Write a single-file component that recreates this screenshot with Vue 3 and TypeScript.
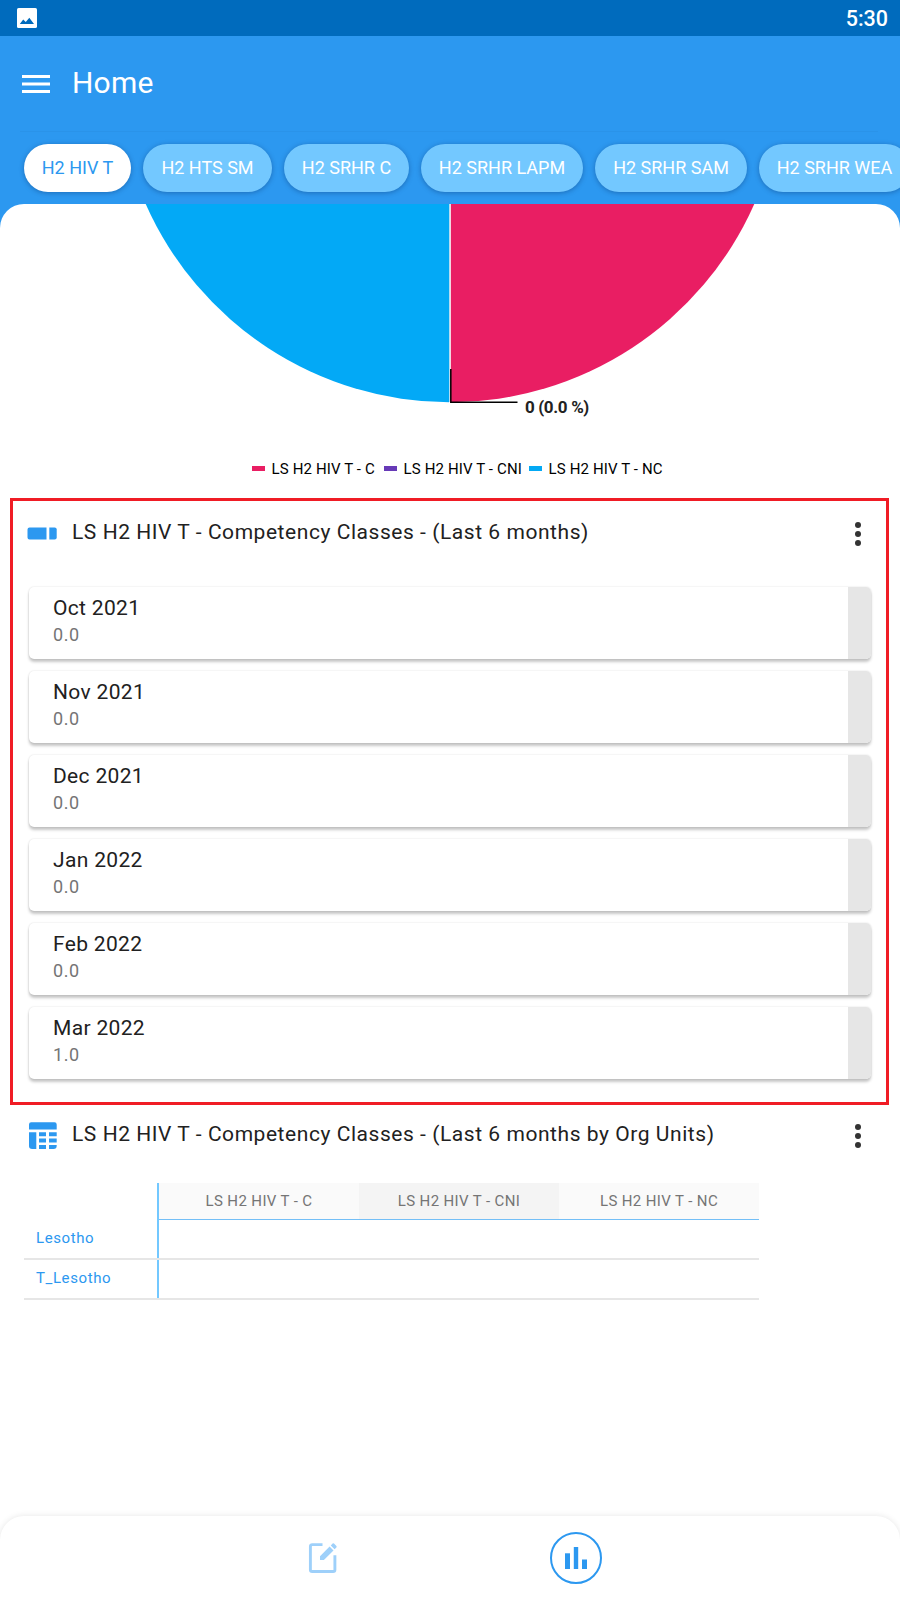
<script setup lang="ts">
interface Tab { label: string; width: number }
interface Period { name: string; value: string }
interface Series { name: string; color: string; width: number }

const tabs: Tab[] = [
  { label: 'H2 HIV T', width: 107 },
  { label: 'H2 HTS SM', width: 129 },
  { label: 'H2 SRHR C', width: 125 },
  { label: 'H2 SRHR LAPM', width: 162 },
  { label: 'H2 SRHR SAM', width: 152 },
  { label: 'H2 SRHR WEA', width: 151 },
]

const series: Series[] = [
  { name: 'LS H2 HIV T - C', color: '#e91e63', width: 132 },
  { name: 'LS H2 HIV T - CNI', color: '#673ab7', width: 145 },
  { name: 'LS H2 HIV T - NC', color: '#03a9f4', width: 140 },
]

const periods: Period[] = [
  { name: 'Oct 2021', value: '0.0' },
  { name: 'Nov 2021', value: '0.0' },
  { name: 'Dec 2021', value: '0.0' },
  { name: 'Jan 2022', value: '0.0' },
  { name: 'Feb 2022', value: '0.0' },
  { name: 'Mar 2022', value: '1.0' },
]

const orgUnits: string[] = ['Lesotho', 'T_Lesotho']
</script>

<template>
  <div class="screen">
    <div class="status">
      <svg class="status-icon" width="20" height="20" viewBox="0 0 20 20">
        <rect width="20" height="20" rx="1.6" fill="#fff" />
        <path d="M2.800 16 6.200 11.600 8.800 14.100 12.300 9.800 17 16Z" fill="#006bbd" />
      </svg>
      <span class="clock">5:30</span>
    </div>

    <header class="header">
      <div class="bar">
        <svg class="menu" width="28" height="18" viewBox="0 0 28 18" fill="#fff">
          <rect width="28" height="3" />
          <rect y="7.5" width="28" height="3" />
          <rect y="15" width="28" height="3" />
        </svg>
        <h1 class="heading">Home</h1>
      </div>
      <nav class="tabs">
        <div
          v-for="(tab, i) in tabs"
          :key="tab.label"
          class="tab"
          :class="{ active: i === 0 }"
          :style="{ width: tab.width + 'px' }"
        >{{ tab.label }}</div>
      </nav>
    </header>

    <main class="panel">
      <section class="pie">
        <svg width="900" height="225" viewBox="0 204 900 225">
          <path d="M449 204H145.700A333 333 0 0 0 449 402.300Z" fill="#03a9f6" />
          <path d="M451 204H754.300A333 333 0 0 1 451 402.300Z" fill="#e91e63" />
          <rect x="449" y="204" width="1" height="198" fill="#b4dcf2" />
          <rect x="450" y="204" width="1" height="198" fill="#f2d7e0" />
          <path d="M450.800 369V402.300H517.500" fill="none" stroke="#000" stroke-width="1.5" />
        </svg>
        <span class="slice-label">0 (0.0 %)</span>
        <div class="legend">
          <div v-for="s in series" :key="s.name" class="legend-item" :style="{ width: s.width + 'px' }">
            <i class="swatch" :style="{ background: s.color }"></i>
            <span>{{ s.name }}</span>
          </div>
        </div>
      </section>

      <section class="boxed">
        <div class="title-row">
          <svg class="title-icon" width="30" height="30" viewBox="0 0 30 30" fill="#2c98f0">
            <path d="M2.500 8.500H19.500V20.500H2.500A2 2 0 0 1 0.500 18.500V10.500A2 2 0 0 1 2.500 8.500Z" />
            <path d="M22.300 8.500H27.700A2 2 0 0 1 29.700 10.500V18.500A2 2 0 0 1 27.700 20.500H22.300Z" />
          </svg>
          <h2 class="title">LS H2 HIV T - Competency Classes - (Last 6 months)</h2>
          <svg class="more" width="6" height="24" viewBox="0 0 6 24" fill="#333">
            <circle cx="3" cy="3" r="3" /><circle cx="3" cy="12" r="3" /><circle cx="3" cy="21" r="3" />
          </svg>
        </div>
        <div class="cards">
          <article v-for="p in periods" :key="p.name" class="card">
            <div class="card-body">
              <div class="card-name">{{ p.name }}</div>
              <div class="card-value">{{ p.value }}</div>
            </div>
            <div class="card-edge"></div>
          </article>
        </div>
      </section>

      <section class="table-section">
        <div class="title-row">
          <svg class="title-icon" width="30" height="30" viewBox="0 1 30 30" fill="#2c98f0">
            <path d="M4.200 2.300H27.500A2.200 2.200 0 0 1 29.700 4.500V9.500H2V4.500A2.200 2.200 0 0 1 4.200 2.300Z" />
            <path d="M2 12.300H9.300V29H5.200A3.200 3.200 0 0 1 2 25.800Z" />
            <path d="M12 12.300H19V16.200H12ZM22 12.300H29.700V16.200H22ZM12 18.600H19V22.500H12ZM22 18.600H29.700V22.500H22ZM12 25H19V29H12ZM22 25H29.700V25.800A3.200 3.200 0 0 1 26.500 29H22Z" />
          </svg>
          <h2 class="title">LS H2 HIV T - Competency Classes - (Last 6 months by Org Units)</h2>
          <svg class="more" width="6" height="24" viewBox="0 0 6 24" fill="#333">
            <circle cx="3" cy="3" r="3" /><circle cx="3" cy="12" r="3" /><circle cx="3" cy="21" r="3" />
          </svg>
        </div>
        <div class="table">
          <div class="row head">
            <div class="corner"></div>
            <div v-for="s in series" :key="s.name" class="col-head">{{ s.name }}</div>
          </div>
          <div v-for="unit in orgUnits" :key="unit" class="row">
            <div class="row-head">{{ unit }}</div>
            <div v-for="s in series" :key="s.name" class="cell"></div>
          </div>
        </div>
      </section>
    </main>

    <footer class="bottom">
      <svg class="edit" width="30" height="32" viewBox="0 0 30 32">
        <path d="M14.500 2.600H4.200A1.800 1.800 0 0 0 2.400 4.400V27.700A1.800 1.800 0 0 0 4.200 29.500H25.100A1.800 1.800 0 0 0 26.900 27.700V13.200" fill="none" stroke="#9ed0fa" stroke-width="2.900" />
        <path d="M12 14.200 21.600 4.600 25.500 8.500 15.900 18.100H12ZM22.800 3.400 24.600 1.600Q25.300 1 26 1.600L28.400 4Q29 4.700 28.400 5.500L26.600 7.200Z" fill="#9ed0fa" />
      </svg>
      <div class="current">
        <svg width="22" height="22" viewBox="0 0 22 22" fill="#2c98f0">
          <rect y="6.300" width="5" height="15.700" /><rect x="8.800" width="4.400" height="22" /><rect x="17" y="12.500" width="5" height="9.500" />
        </svg>
      </div>
    </footer>
  </div>
</template>

<style>
body { margin: 0; }
</style>

<style scoped>
.screen {
  width: 900px;
  height: 1600px;
  display: flex;
  flex-direction: column;
  overflow: hidden;
  background: linear-gradient(#2c98f0 300px, #fff 300px);
  font-family: Roboto, "Liberation Sans", sans-serif;
}
.screen * { box-sizing: border-box; }
.screen svg { display: block; flex: none; }
.status {
  flex: none;
  height: 36px;
  padding: 0 12px 0 17px;
  display: flex;
  align-items: center;
  justify-content: space-between;
  background: #006bbd;
  color: #fff;
}
.clock { font-size: 21.500px; font-weight: 500; line-height: 36px; padding-top: 2px; }
.header { flex: none; height: 168px; }
.bar {
  height: 96px;
  margin: 0 22px 0 20px;
  padding-left: 2px;
  display: flex;
  align-items: center;
  border-bottom: 1px solid #2a93e9;
}
.menu { margin-top: 1px; }
.heading { margin: 0 0 2px 22px; font-size: 30px; font-weight: 400; line-height: 40px; letter-spacing: 0.200px; color: #fff; }
.tabs { display: flex; gap: 12px; padding: 12px 0 0 24px; }
.tab {
  flex: none;
  height: 48px;
  line-height: 48px;
  border-radius: 24px;
  text-align: center;
  font-size: 18px;
  color: #fff;
  background: #73c8ff;
  box-shadow: 0 1px 5px rgba(0, 30, 80, 0.350);
}
.tab.active { color: #2c98f0; background: #fff; }
.panel {
  flex: 1;
  min-height: 0;
  overflow: hidden;
  border-radius: 24px 24px 0 0;
  background: #fff;
}
.pie { position: relative; height: 294px; }
.slice-label {
  position: absolute;
  left: 525px;
  top: 193px;
  font-size: 17px;
  line-height: 20px;
  letter-spacing: -0.350px;
  font-weight: 700;
  color: #222;
}
.legend { display: flex; padding: 30px 0 0 252px; }
.legend-item {
  flex: none;
  display: flex;
  align-items: center;
  font-size: 15px;
  line-height: 20px;
  letter-spacing: 0.140px;
  color: #000;
  white-space: nowrap;
}
.swatch { flex: none; width: 12.500px; height: 5px; margin: 0 7px 2px 0; }
.boxed {
  width: 879px;
  height: 607px;
  margin-left: 10px;
  border: 3px solid #f01c25;
  padding: 0 14px;
}
.title-row { display: flex; align-items: center; height: 66px; }
.title {
  margin: 0 0 5px 15px;
  flex: 1;
  font-size: 21px;
  line-height: 30px;
  font-weight: 400;
  letter-spacing: 0.550px;
  color: #212121;
  white-space: nowrap;
}
.more { margin-right: 11px; }
.cards { display: flex; flex-direction: column; gap: 12px; padding: 20px 0 0 2px; width: 844px; }
.card {
  display: flex;
  height: 72px;
  border-radius: 5px;
  background: #fff;
  box-shadow: 0 3px 3px rgba(0, 0, 0, 0.220), 0 0 2px rgba(0, 0, 0, 0.140);
  overflow: hidden;
}
.card-body { flex: 1; padding: 8px 0 0 24px; }
.card-name { font-size: 21px; line-height: 26px; letter-spacing: 0.330px; color: #212121; }
.card-value { font-size: 18px; line-height: 26px; padding-top: 1px; letter-spacing: 0.600px; color: #757575; }
.card-edge { width: 23px; background: #e6e6e6; }
.table-section { padding: 0 17px 0 27px; }
.table-section .title-row { height: 61px; }
.table-section .title { margin-bottom: 4px; }
.table-section .more { margin-right: 22px; }
.table { margin: 17px 0 0 -3px; width: 735px; }
.row {
  display: grid;
  grid-template-columns: 135px 200px 200px 200px;
  height: 40px;
  border-bottom: 2px solid #e6e6e6;
}
.row.head { height: 37px; border-bottom: 0; }
.corner, .row-head { border-right: 2px solid #73c8ff; }
.row-head { padding-left: 12px; font-size: 15px; line-height: 36px; letter-spacing: 0.600px; color: #2c98f0; }
.col-head {
  font-size: 15px;
  line-height: 36px;
  text-align: center;
  letter-spacing: 0.380px;
  color: #757575;
  background: #fafafa;
  border-bottom: 1px solid #73bff7;
}
.col-head:nth-child(3) { background: #f4f4f4; }
.bottom {
  flex: none;
  height: 84px;
  display: flex;
  align-items: center;
  border-radius: 24px 24px 0 0;
  background: #fff;
  box-shadow: 0 0 6px rgba(0, 0, 0, 0.100);
}
.edit { margin-left: 308px; }
.current {
  width: 52px;
  height: 52px;
  margin-left: 212px;
  border: 2px solid #2c98f0;
  border-radius: 50%;
  display: grid;
  place-items: center;
}
</style>
